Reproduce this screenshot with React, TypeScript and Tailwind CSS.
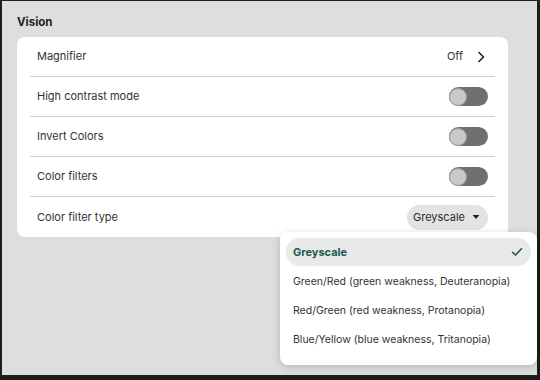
import React from "react";

function Toggle() {
  return (
    <div className="relative h-[19px] w-[39px] rounded-full bg-[#707070]">
      <div className="absolute left-0 top-[0.5px] h-[18px] w-[18px] rounded-full border border-[#9a9a9a] bg-[#c9c9c9]" />
    </div>
  );
}

function Row({ label, children, last }: { label: string; children?: React.ReactNode; last?: boolean }) {
  return (
    <div className={`mx-[13px] flex h-[40px] items-center justify-between px-[7px] ${last ? "" : "border-b border-[#cfcfcf]"}`}>
      <span className="text-[11px] text-[#333]">{label}</span>
      {children}
    </div>
  );
}

export default function App() {
  const items = [
    "Green/Red (green weakness, Deuteranopia)",
    "Red/Green (red weakness, Protanopia)",
    "Blue/Yellow (blue weakness, Tritanopia)",
  ];
  return (
    <div className="h-[380px] w-[540px] bg-[#1c1c1c] pl-[2px] pt-[1px]" style={{ fontFamily: "Inter, 'Noto Sans', sans-serif" }}>
      <div className="relative h-[374px] w-[535px] bg-[#dedede] pl-[15px] pt-[13px]">
        <div className="text-[11.5px] font-bold leading-[16px] text-[#1f1f1f]">Vision</div>
        <div className="mt-[7px] w-[491px] rounded-[8px] bg-white">
          <Row label="Magnifier">
            <div className="flex items-center gap-[13px]">
              <span className="text-[11px] text-[#333]">Off</span>
              <svg width="10" height="12" viewBox="0 0 10 12" className="mr-[2px]">
                <path d="M3 1.5 L7.5 6 L3 10.5" fill="none" stroke="#222" strokeWidth="1.6" strokeLinecap="round" strokeLinejoin="round" />
              </svg>
            </div>
          </Row>
          <Row label="High contrast mode"><Toggle /></Row>
          <Row label="Invert Colors"><Toggle /></Row>
          <Row label="Color filters"><Toggle /></Row>
          <Row label="Color filter type" last>
            <div className="flex h-[25px] items-center gap-[7px] rounded-full bg-[#e3e3e3] pl-[6px] pr-[8px]">
              <span className="text-[11px] text-[#2a2a2a]">Greyscale</span>
              <svg width="8" height="6" viewBox="0 0 8 6">
                <path d="M0.5 1 L7.5 1 L4 5 Z" fill="#222" />
              </svg>
            </div>
          </Row>
        </div>

        <div className="absolute left-[278px] top-[231px] w-[257px] rounded-[8px] bg-white px-[6px] pb-[11px] pt-[6px] shadow-[0_2px_8px_rgba(0,0,0,0.18)]">
          <div className="flex h-[28px] items-center justify-between rounded-full bg-[#e7eae8] pl-[7px] pr-[8px]">
            <span className="text-[11px] font-bold text-[#1b5c52]">Greyscale</span>
            <svg width="12" height="10" viewBox="0 0 12 10">
              <path d="M1.5 5.2 L4.5 8 L10.5 1.8" fill="none" stroke="#1e4d45" strokeWidth="1.5" strokeLinecap="round" strokeLinejoin="round" />
            </svg>
          </div>
          <div className="pt-[1px]">
            {items.map((t) => (
              <div key={t} className="flex h-[29px] items-center pl-[7px] text-[10.5px] text-[#333]">
                {t}
              </div>
            ))}
          </div>
        </div>
      </div>
    </div>
  );
}
